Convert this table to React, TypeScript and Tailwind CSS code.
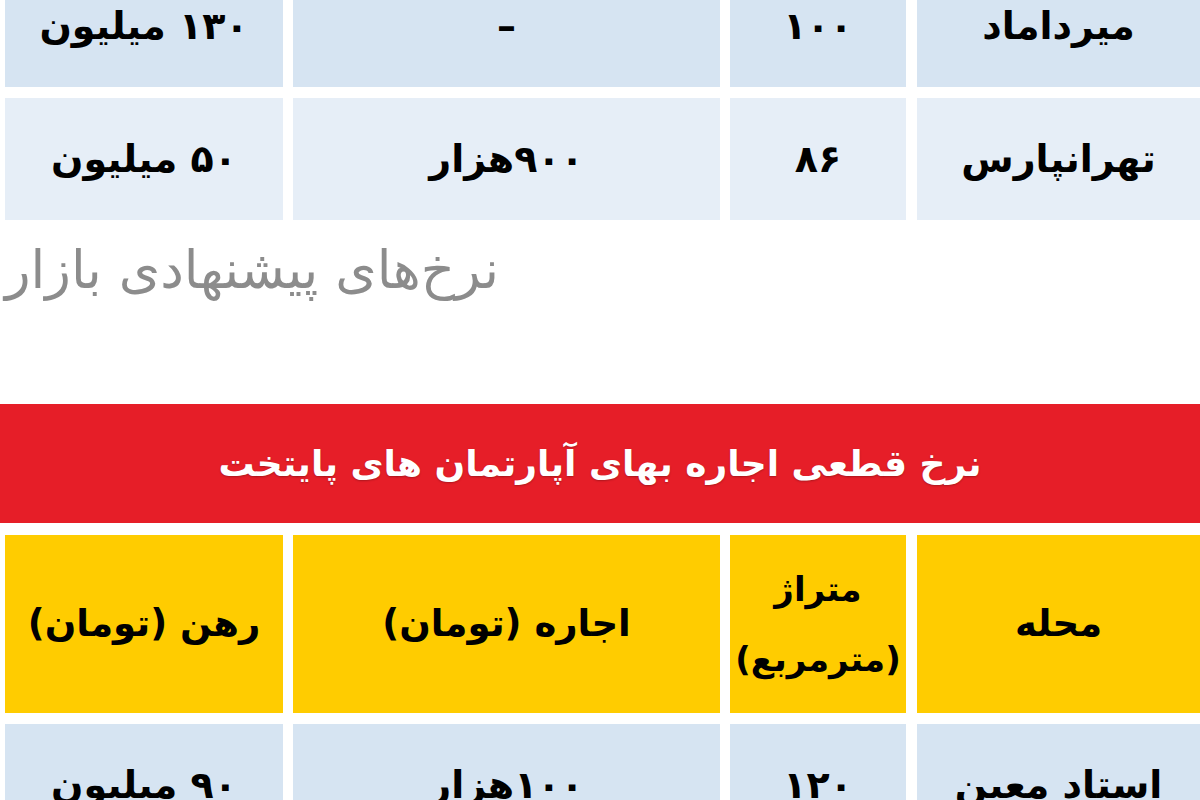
const rowsTop = [
  { area: "میرداماد", size: "۱۰۰", rent: "–", deposit: "۱۳۰ میلیون", bg: "bg-[#d6e4f2]" },
  { area: "تهرانپارس", size: "۸۶", rent: "۹۰۰هزار", deposit: "۵۰ میلیون", bg: "bg-[#e6eef7]" },
];

const rowsBottom = [
  { area: "استاد معین", size: "۱۲۰", rent: "۱۰۰هزار", deposit: "۹۰ میلیون", bg: "bg-[#d6e4f2]" },
];

type Row = (typeof rowsTop)[number];

const Cell = ({ children, bg }: { children: React.ReactNode; bg: string }) => (
  <div className={`${bg} flex items-center justify-center text-center whitespace-nowrap overflow-hidden`}>
    {children}
  </div>
);

const DataRow = ({ row }: { row: Row }) => (
  <div className="grid grid-cols-[283px_11px_176px_10px_427px_10px_278px] h-[122px] text-[38px] font-bold text-black">
    <Cell bg={row.bg}>{row.area}</Cell>
    <div />
    <Cell bg={row.bg}>{row.size}</Cell>
    <div />
    <Cell bg={row.bg}>{row.rent}</Cell>
    <div />
    <Cell bg={row.bg}>{row.deposit}</Cell>
  </div>
);

export default function App() {
  return (
    <div
      dir="rtl"
      className="w-[1200px] h-[800px] overflow-hidden bg-white"
      style={{ fontFamily: '"DejaVu Sans", sans-serif' }}
    >
      <div className="pl-[5px] mt-[-35px] flex flex-col gap-[11px]">
        {rowsTop.map((row) => (
          <DataRow key={row.area} row={row} />
        ))}
      </div>

      <div className="pl-[5px] h-[184px] pt-[12px] text-left text-[53px] leading-[76px] text-[#8c8c8c] whitespace-nowrap">
        نرخ‌های پیشنهادی بازار
      </div>

      <div className="bg-[#e61e28] h-[119px] flex items-center justify-center text-white font-bold text-[36px] [text-shadow:0_1px_2px_rgba(0,0,0,0.25)]">
        نرخ قطعی اجاره بهای آپارتمان های پایتخت
      </div>

      <div className="pl-[5px] pt-[12px] flex flex-col gap-[11px]">
        <div className="grid grid-cols-[283px_11px_176px_10px_427px_10px_278px] h-[178px] text-[37px] font-bold text-black">
          <Cell bg="bg-[#ffcc00]">محله</Cell>
          <div />
          <Cell bg="bg-[#ffcc00]">
            <div className="leading-[70px] text-[34px]">
              <div>متراژ</div>
              <div>(مترمربع)</div>
            </div>
          </Cell>
          <div />
          <Cell bg="bg-[#ffcc00]">اجاره (تومان)</Cell>
          <div />
          <Cell bg="bg-[#ffcc00]">رهن (تومان)</Cell>
        </div>
        {rowsBottom.map((row) => (
          <DataRow key={row.area} row={row} />
        ))}
      </div>
    </div>
  );
}
